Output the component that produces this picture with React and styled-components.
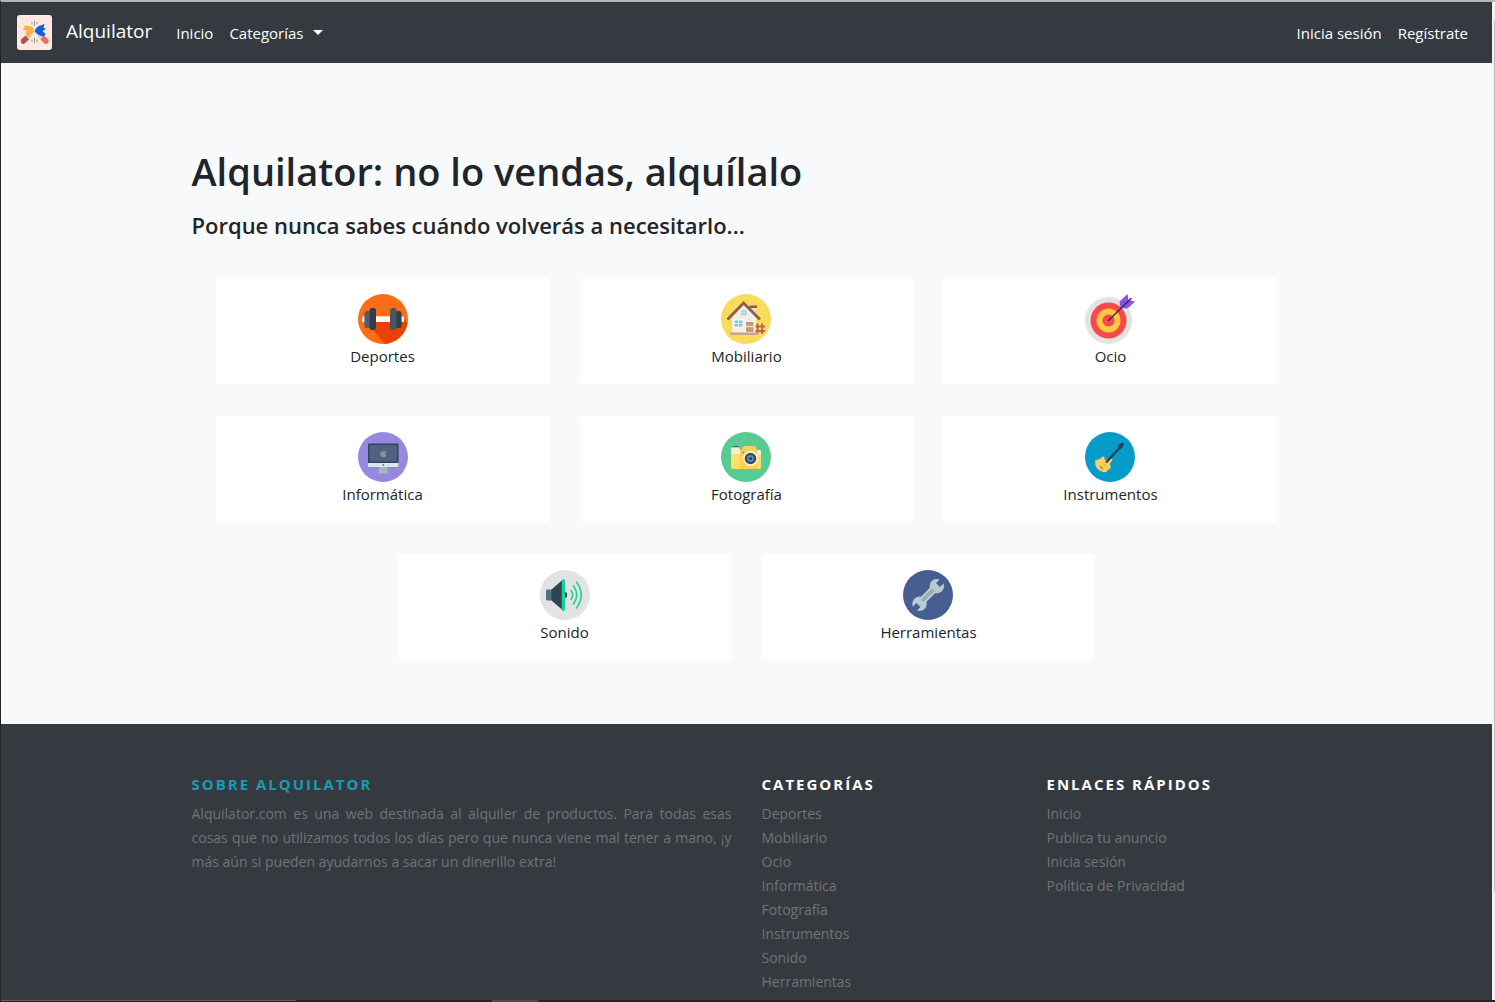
import React from "react";
import styled, { createGlobalStyle } from "styled-components";

const GlobalStyle = createGlobalStyle`
  *, *::before, *::after { box-sizing: border-box; }
  body {
    margin: 0;
    background: #f8f9fb;
    color: #212529;
    font-family: "Open Sans", "Noto Sans", sans-serif;
    font-size: 15px;
    line-height: 24px;
  }
`;

const Frame = styled.div`
  display: grid;
  grid-template-columns: minmax(0, 1fr) 3px;
  grid-template-rows: minmax(0, 1fr) 2px;
  height: 100vh;
  border-top: 2px solid #b4b6b8;
  border-left: 1px solid #20261f;
`;

const Page = styled.div`
  display: flex;
  flex-direction: column;
  overflow: hidden;
`;

const ScrollTrack = styled.div`
  background: #f1f1f1;
  padding: 17px 0 108px 2px;
`;

const ScrollThumb = styled.div`
  height: 100%;
  background: #c1c1c1;
`;

const BottomEdge = styled.div`
  grid-column: 1 / -1;
  display: flex;
  background: #252526;
`;

const StatusBar = styled.div`
  width: 295px;
  height: 1px;
  background: #5f6062;
`;

const TaskMark = styled.div`
  width: 46px;
  margin-left: 196px;
  background: #4d4e50;
`;

const Header = styled.header`
  display: flex;
  align-items: center;
  flex: none;
  height: 61px;
  padding: 0 16px;
  background: #343a40;
`;

const Brand = styled.a`
  display: flex;
  align-items: flex-start;
  gap: 14px;
  margin-right: 16px;
  color: #fff;
  font-size: 19px;
  line-height: 32px;
  text-decoration: none;
`;

const Nav = styled.nav`
  display: flex;
  flex: 1;
  justify-content: space-between;
`;

const NavGroup = styled.div`
  display: flex;
`;

const NavLink = styled.a`
  padding: 8px;
  color: #fff;
  text-decoration: none;
`;

const NavToggle = styled.button`
  display: flex;
  align-items: center;
  gap: 9px;
  padding: 8px;
  border: 0;
  background: none;
  color: #fff;
  font: inherit;
  cursor: pointer;

  &::after {
    content: "";
    border: 5px solid transparent;
    border-top-color: #fff;
    border-bottom: 0;
  }
`;

const Container = styled.div`
  width: 100%;
  max-width: 1140px;
  margin: 0 auto;
  padding: 0 15px;
`;

const Main = styled.main`
  flex: none;
  padding: 84px 0 64px;
`;

const Title = styled.h1`
  margin: 0 0 16px;
  font-size: 38px;
  font-weight: 600;
  line-height: 48px;
`;

const Subtitle = styled.h2`
  margin: 0 0 38px;
  font-size: 22px;
  font-weight: 600;
  line-height: 29px;
`;

const CardGrid = styled.div`
  display: flex;
  flex-wrap: wrap;
  justify-content: center;
  gap: 32px 30px;
  padding: 0 24px;
`;

const Card = styled.a`
  display: flex;
  flex-direction: column;
  align-items: center;
  width: calc((100% - 60px) / 3);
  min-width: 200px;
  padding: 16px;
  border-radius: 4px;
  background: #fff;
  color: #212529;
  text-decoration: none;
`;

const Footer = styled.footer`
  flex: 1 0 auto;
  padding: 48px 0 6px;
  background: #343a40;
  color: #737373;
  font-size: 14px;
`;

const FooterColumns = styled.div`
  display: grid;
  grid-template-columns: 540fr 255fr 255fr;
  gap: 30px;
`;

const FooterTitle = styled.h3`
  margin: 0 0 6px;
  color: ${({ $accent }) => ($accent ? "#1b9ab5" : "#fff")};
  font-size: 15px;
  font-weight: 700;
  line-height: 24px;
  letter-spacing: 2px;
  text-transform: uppercase;
`;

const About = styled.p`
  margin: 0;
  text-align: justify;
`;

const LinkList = styled.ul`
  margin: 0;
  padding: 0;
  list-style: none;
`;

const FooterLink = styled.a`
  color: inherit;
  text-decoration: none;
`;

const Drawing = styled.svg`
  display: block;
  flex: none;
`;

function Logo() {
  return (
    <Drawing width="35" height="35" viewBox="0 0 35 35" aria-hidden="true">
      <rect width="35" height="35" rx="3" fill="#fde9e2" />
      <path d="M9 24L13 20" stroke="#f6cdb9" strokeWidth="4" />
      <path d="M26 24L22 20" stroke="#f6cdb9" strokeWidth="4" />
      <path d="M6 15L8 10.500L15 11.500L17.300 16.500L12 22L8.500 19.500L9.500 15Z" fill="#f4b34a" />
      <path d="M17.500 16.500Q19 12 22 11L27.500 9L26.500 12.500L29 14L25.500 16L28.500 19L27 22L21.500 20Z" fill="#0965dc" />
      <path d="M4 24.500L8.500 20.500L12 24.500L7 29Q3 29 4 24.500Z" fill="#ad5447" />
      <path d="M31.500 24.500L27 20.500L23.500 24.500L28 29Q32.500 29 31.500 24.500Z" fill="#e66e64" />
      <path d="M17.500 6V11M15 7V9.500M20 7V9.500M17.500 23V28M15 24.500V27M20 24.500V27" stroke="#817b75" strokeWidth="0.8" />
    </Drawing>
  );
}

const art = {
  sport: (
    <>
      <circle cx="25" cy="25" r="25" fill="#ff6c18" />
      <path d="M14 35L27 49.900A25 25 0 0 0 49.600 29L43 22L14 24Z" fill="#e84300" />
      <path d="M4 22.500H46V28H4Z" fill="#e4e8ec" />
      <path d="M18 22.500H32V28H18Z" fill="#fff" />
      <rect x="6.500" y="17" width="6" height="17" rx="2.500" fill="#555b69" />
      <rect x="11.500" y="14" width="6.500" height="22" rx="2.500" fill="#343c4b" />
      <rect x="37.500" y="17" width="6" height="17" rx="2.500" fill="#343c4b" />
      <rect x="32" y="14" width="6.500" height="22" rx="2.500" fill="#4c5361" />
    </>
  ),
  home: (
    <>
      <circle cx="25" cy="25" r="25" fill="#f9dc5c" />
      <path d="M29.500 11.500H35V21H29.500Z" fill="#e9dccb" />
      <path d="M28.500 11.500H36V14H28.500Z" fill="#8d5e50" />
      <path d="M11 24L23 11L35 24V38.500H11Z" fill="#f5eee2" />
      <path d="M6.500 25.500L22.500 9L39 25.500" fill="none" stroke="#8d5e50" strokeWidth="2.800" />
      <circle cx="23" cy="18.800" r="3" fill="#84d1f5" />
      <path d="M23 16V22M20 18.800H26" stroke="#f5eee2" strokeWidth="0.7" />
      <path d="M13 26H22V33H13Z" fill="#70c6f5" stroke="#fff" />
      <path d="M17.500 26V33M13 29.500H22" stroke="#fff" strokeWidth="0.8" />
      <path d="M24.500 27.500H33V38.500H24.500Z" fill="#c69676" stroke="#fff" />
      <path d="M25 32.500H33" stroke="#efe1cf" strokeWidth="1.500" />
      <path d="M36.500 29.500V40M41 29.500V40M34.500 32.500H44M34.500 37H44" stroke="#bb6350" strokeWidth="1.800" />
      <path d="M9 38.500H37V41H9Z" fill="#c7a58a" />
    </>
  ),
  target: (
    <>
      <circle cx="23.500" cy="26.500" r="23.500" fill="#e3e3e4" />
      <circle cx="23.500" cy="26.500" r="18" fill="#fb4849" />
      <circle cx="23.500" cy="26.500" r="12" fill="#ffc943" />
      <circle cx="23.500" cy="26.500" r="6" fill="#fb4849" />
      <path d="M35.500 14L34.500 7.500L42.500 0L43.500 6L50 7.500L42.500 14.500Z" fill="#8e4df0" />
      <path d="M23.500 26.500L46 4.500" stroke="#333545" strokeWidth="1.600" strokeLinecap="round" />
    </>
  ),
  computer: (
    <>
      <circle cx="25" cy="25" r="25" fill="#9788df" />
      <path d="M21.500 34H28.500L30 41.500H20.500Z" fill="#a4b8bf" />
      <path d="M10 12.500Q10 11.500 11 11.500H39.500Q40.500 11.500 40.500 12.500V31H10Z" fill="#35445d" />
      <path d="M11.500 13H39V29.500H11.500Z" fill="#4e617e" />
      <path d="M10 31H40.500V33.500Q40.500 35 39 35H11.500Q10 35 10 33.500Z" fill="#dce5e8" />
      <path d="M25.300 19.700Q27.500 18.800 28.500 20.300Q26.500 21.500 28.500 23.300Q27.200 26 25.300 25Q23.500 26 22.500 23.500Q21.700 20 24 19.500ZM25.200 19.200Q25.200 17.500 26.700 17Q26.700 18.600 25.200 19.200Z" fill="#8290a7" />
      <circle cx="25.300" cy="33" r="0.800" fill="#34445d" />
    </>
  ),
  camera: (
    <>
      <circle cx="25" cy="25" r="25" fill="#56cb94" />
      <path d="M20 18L23 14H34L36 18Z" fill="#f7d05a" />
      <rect x="12" y="14" width="6" height="3" fill="#486586" />
      <path d="M10 17Q10 15.500 12 15.500H18L19 18H38Q40 18 40 20V35.500Q40 37 38 37H12Q10 37 10 35.500Z" fill="#ffdf6c" />
      <path d="M10 17Q10 15.500 12 15.500H18L19 18V22H10ZM36 18H38Q40 18 40 20V23H36Z" fill="#f7efd7" />
      <path d="M19 18H36V37H19Z" fill="#fbd153" />
      <circle cx="29.500" cy="26.500" r="7.500" fill="#fff4ce" />
      <circle cx="29.500" cy="26.500" r="5.800" fill="#314d70" />
      <circle cx="29.500" cy="26.500" r="3.300" fill="#6e8eac" />
      <circle cx="29.500" cy="26.500" r="1.700" fill="#29496a" />
      <circle cx="22" cy="20.500" r="1" fill="#ef5148" />
    </>
  ),
  guitar: (
    <>
      <circle cx="25" cy="25" r="25" fill="#079bc9" />
      <path d="M10.500 28Q14 28 16.500 25.500Q19 23.500 19.500 25.500Q19 28 21 28Q24.500 25.500 27 27Q28 28.500 25.500 30.500Q24 33 26 35Q25 37.500 22.500 38Q22 41 18.500 40Q12.500 38.500 10.500 33.500Q9.500 30 10.500 28Z" fill="#ffce5c" />
      <path d="M21 30.500L35.500 15" stroke="#293e52" strokeWidth="2.400" />
      <path d="M33 15L34 12.500L37.500 10.500L39 12L37.500 15.500L35 17Z" fill="#293e52" />
      <path d="M15 34L18 37" stroke="#b87942" strokeWidth="1.500" />
      <path d="M18 31.500L20.500 34" stroke="#d19a46" />
    </>
  ),
  sound: (
    <>
      <circle cx="25" cy="25" r="25" fill="#e3e3e4" />
      <path d="M6 20.500Q6 19.500 7 19.500H13V30.500H7Q6 30.500 6 29.500Z" fill="#547184" />
      <path d="M11.500 19.500L22.500 10V40L11.500 30.500Z" fill="#304552" />
      <circle cx="24" cy="25" r="3.200" fill="#304552" />
      <rect x="21.800" y="9" width="3.200" height="32" rx="1.600" fill="#18d397" />
      <path d="M31 20.500Q34.500 25 31 29.500M33.500 16Q40 25 33.500 34M36.500 12Q46 25 36.500 38" fill="none" stroke="#18d397" strokeWidth="1.600" strokeLinecap="round" />
    </>
  ),
  wrench: (
    <>
      <circle cx="25" cy="25" r="25" fill="#465e91" />
      <circle cx="33.800" cy="16.200" r="7.200" fill="#b8cad2" />
      <circle cx="16.500" cy="33.800" r="7.200" fill="#b8cad2" />
      <path d="M18 32L32 18" stroke="#b8cad2" strokeWidth="7.500" />
      <path d="M35 15L42 8M15.500 35L8.500 42" stroke="#465e91" strokeWidth="5.500" />
      <path d="M20.500 29.500L29.500 20.500" stroke="#8798a6" strokeWidth="3" strokeLinecap="round" />
      <path d="M20.500 29.500L29.500 20.500" stroke="#b8cad2" strokeLinecap="round" />
    </>
  ),
};

const categories = [
  ["Deportes", "sport"],
  ["Mobiliario", "home"],
  ["Ocio", "target"],
  ["Informática", "computer"],
  ["Fotografía", "camera"],
  ["Instrumentos", "guitar"],
  ["Sonido", "sound"],
  ["Herramientas", "wrench"],
];

const quickLinks = ["Inicio", "Publica tu anuncio", "Inicia sesión", "Política de Privacidad"];

function FooterLinks({ title, items }) {
  return (
    <section>
      <FooterTitle>{title}</FooterTitle>
      <LinkList>
        {items.map((item) => (
          <li key={item}>
            <FooterLink href="#">{item}</FooterLink>
          </li>
        ))}
      </LinkList>
    </section>
  );
}

export default function App() {
  return (
    <>
      <GlobalStyle />
      <Frame>
        <Page>
          <Header>
            <Brand href="#">
              <Logo />
              <span>Alquilator</span>
            </Brand>
            <Nav>
              <NavGroup>
                <NavLink href="#">Inicio</NavLink>
                <NavToggle type="button" aria-haspopup="true">Categorías</NavToggle>
              </NavGroup>
              <NavGroup>
                <NavLink href="#">Inicia sesión</NavLink>
                <NavLink href="#">Regístrate</NavLink>
              </NavGroup>
            </Nav>
          </Header>
          <Main>
            <Container>
              <Title>Alquilator: no lo vendas, alquílalo</Title>
              <Subtitle>Porque nunca sabes cuándo volverás a necesitarlo...</Subtitle>
              <CardGrid>
                {categories.map(([name, icon]) => (
                  <Card href="#" key={name}>
                    <Drawing width="50" height="50" viewBox="0 0 50 50" aria-hidden="true">
                      {art[icon]}
                    </Drawing>
                    <span>{name}</span>
                  </Card>
                ))}
              </CardGrid>
            </Container>
          </Main>
          <Footer>
            <Container>
              <FooterColumns>
                <section>
                  <FooterTitle $accent>Sobre Alquilator</FooterTitle>
                  <About>
                    Alquilator.com es una web destinada al alquiler de productos. Para todas esas
                    cosas que no utilizamos todos los días pero que nunca viene mal tener a mano, ¡y
                    más aún si pueden ayudarnos a sacar un dinerillo extra!
                  </About>
                </section>
                <FooterLinks title="Categorías" items={categories.map(([name]) => name)} />
                <FooterLinks title="Enlaces rápidos" items={quickLinks} />
              </FooterColumns>
            </Container>
          </Footer>
        </Page>
        <ScrollTrack>
          <ScrollThumb />
        </ScrollTrack>
        <BottomEdge>
          <StatusBar />
          <TaskMark />
        </BottomEdge>
      </Frame>
    </>
  );
}
